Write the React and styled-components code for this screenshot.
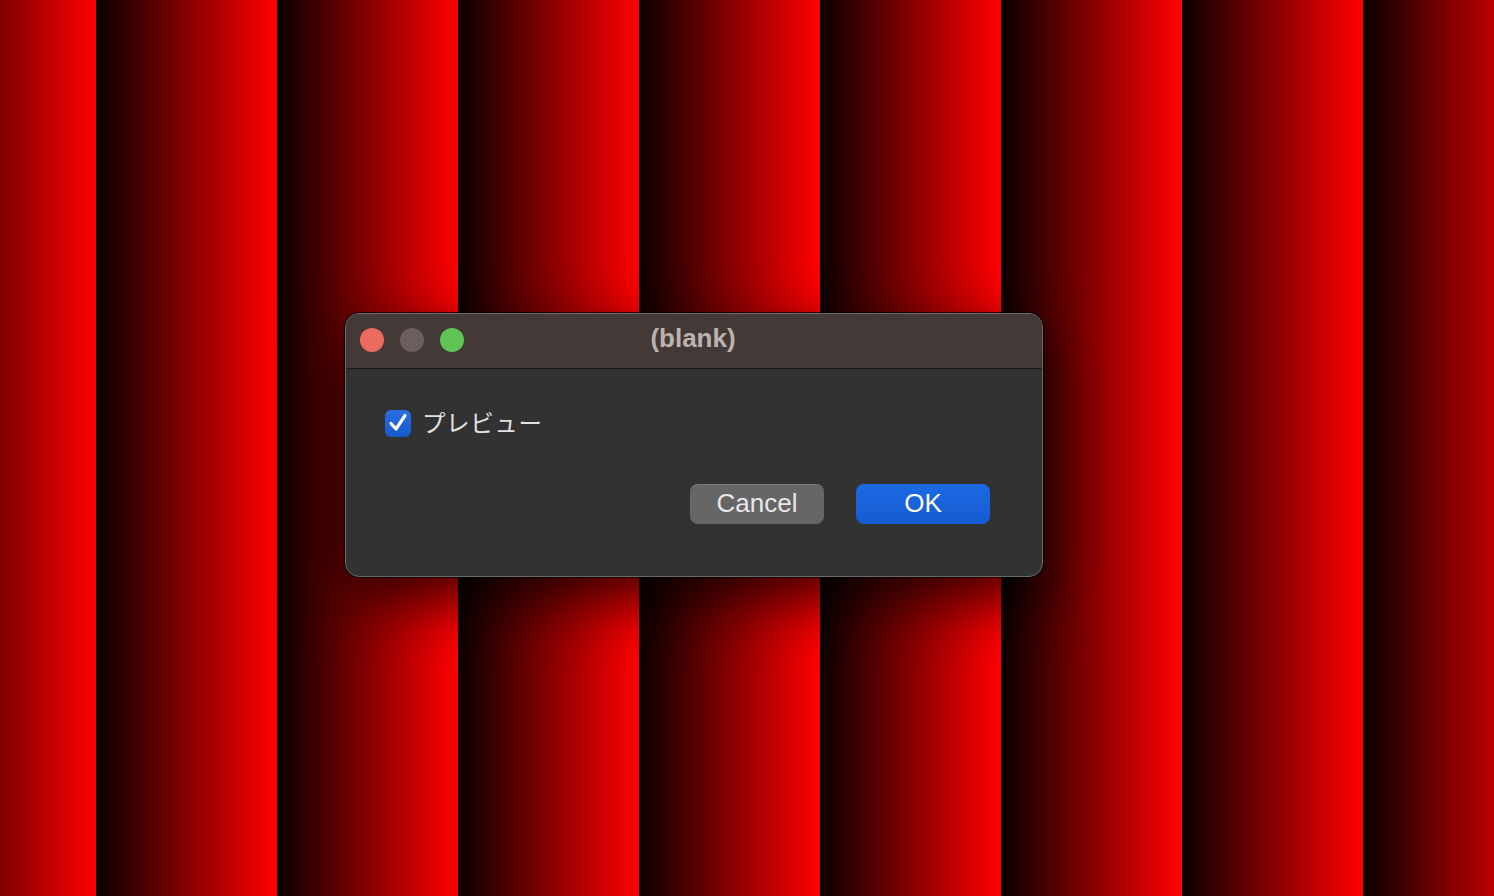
import React from 'react';
import styled, { createGlobalStyle } from 'styled-components';

const GlobalStyle = createGlobalStyle`
  html, body {
    margin: 0;
    padding: 0;
    height: 100%;
  }
  body {
    font-family: 'Liberation Sans', 'Noto Sans CJK JP', sans-serif;
  }
`;

const Desktop = styled.div`
  width: 1494px;
  height: 896px;
  box-sizing: border-box;
  padding: 313px 0 0 345px;
  background-color: #000;
  background-image: linear-gradient(to right, #0a0000 0%, #ff0000 99.4%, #ff0000 100%);
  background-size: 181px 100%;
  background-repeat: repeat-x;
  background-position: 96px 0;
  overflow: hidden;
`;

const Window = styled.div`
  width: 698px;
  height: 264px;
  box-sizing: border-box;
  border-radius: 14px;
  border: 1px solid #6b6b6b;
  box-shadow: 0 0 0 1px rgba(0, 0, 0, 0.7), 0 22px 60px rgba(0, 0, 0, 0.75);
  overflow: hidden;
  display: flex;
  flex-direction: column;
  background: #323232;
`;

const TitleBar = styled.div`
  position: relative;
  height: 55px;
  flex-shrink: 0;
  background: #433936;
  border-bottom: 1px solid #1a1a1a;
  display: flex;
  align-items: center;
  padding: 0 0 3px 14px;
  box-sizing: border-box;
  gap: 16px;
`;

const Light = styled.span`
  width: 24px;
  height: 24px;
  border-radius: 50%;
  background: ${({ $color }) => $color};
`;

const Title = styled.div`
  position: absolute;
  inset: 0 0 5px 0;
  display: flex;
  align-items: center;
  justify-content: center;
  font-size: 26px;
  font-weight: bold;
  color: #bcb3b0;
  padding-right: 2px;
  pointer-events: none;
`;

const Body = styled.div`
  flex: 1;
  padding: 40px 52px 0 39px;
  display: flex;
  flex-direction: column;
`;

const CheckRow = styled.label`
  display: flex;
  align-items: center;
  gap: 11px;
  height: 28px;
`;

const CheckBox = styled.span`
  width: 26px;
  height: 27px;
  border-radius: 6px;
  background: linear-gradient(#2a70e0, #1659c9);
  display: flex;
  align-items: center;
  justify-content: center;
`;

const Label = styled.span`
  font-family: 'Noto Sans CJK JP', sans-serif;
  font-size: 23.5px;
  color: #e2e2e2;
  letter-spacing: 0.6px;
  margin-top: -2px;
`;

const Buttons = styled.div`
  margin-top: 47px;
  display: flex;
  justify-content: flex-end;
  gap: 32px;
`;

const Button = styled.button`
  width: 134px;
  height: 40px;
  border: none;
  border-radius: 8px;
  font-family: 'Liberation Sans', sans-serif;
  font-size: 26px;
  padding: 0 0 2px;
  color: ${({ $primary }) => ($primary ? '#ffffff' : '#e8e8e8')};
  background: ${({ $primary }) =>
    $primary ? 'linear-gradient(#1c6ae3, #155bd1)' : '#666666'};
  box-shadow: ${({ $primary }) =>
    $primary ? 'none' : 'inset 0 1px 0 rgba(255,255,255,0.12)'};
`;

export default function App() {
  return (
    <>
      <GlobalStyle />
      <Desktop>
        <Window>
          <TitleBar>
            <Light $color="#ed6a5e" />
            <Light $color="#6a5f5c" />
            <Light $color="#5fc454" />
            <Title>(blank)</Title>
          </TitleBar>
          <Body>
            <CheckRow>
              <CheckBox>
                <svg width="22" height="22" viewBox="0 0 22 22">
                  <path
                    d="M4 11.5 L9 17 L18 3.5"
                    fill="none"
                    stroke="#fff"
                    strokeWidth="3.2"
                    strokeLinecap="round"
                    strokeLinejoin="round"
                  />
                </svg>
              </CheckBox>
              <Label>プレビュー</Label>
            </CheckRow>
            <Buttons>
              <Button>Cancel</Button>
              <Button $primary>OK</Button>
            </Buttons>
          </Body>
        </Window>
      </Desktop>
    </>
  );
}
